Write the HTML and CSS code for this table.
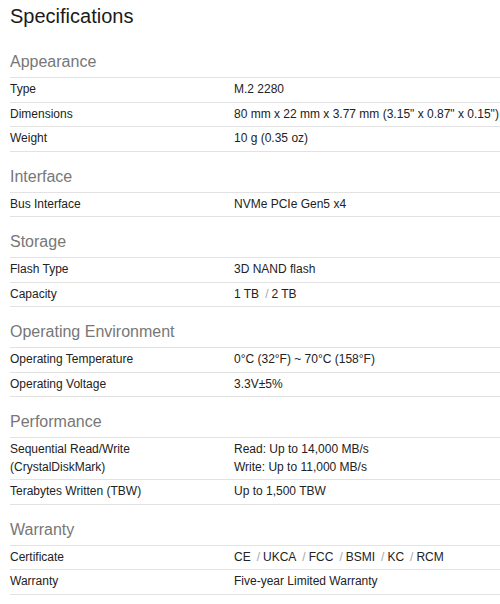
FILE: index.html
```html
<!DOCTYPE html>
<html>
<head>
<meta charset="utf-8">
<link rel="stylesheet" href="styles.css">
</head>
<body>
<div class="page">
  <h1 class="title">Specifications</h1>

  <section class="section">
    <h2 class="section-title">Appearance</h2>
    <div class="spec-table">
      <div class="row"><div class="label">Type</div><div class="value">M.2 2280</div></div>
      <div class="row"><div class="label">Dimensions</div><div class="value">80 mm x 22 mm x 3.77 mm (3.15" x 0.87" x 0.15")</div></div>
      <div class="row"><div class="label">Weight</div><div class="value">10 g (0.35 oz)</div></div>
    </div>
  </section>

  <section class="section">
    <h2 class="section-title">Interface</h2>
    <div class="spec-table">
      <div class="row"><div class="label">Bus Interface</div><div class="value">NVMe PCIe Gen5 x4</div></div>
    </div>
  </section>

  <section class="section">
    <h2 class="section-title">Storage</h2>
    <div class="spec-table">
      <div class="row"><div class="label">Flash Type</div><div class="value">3D NAND flash</div></div>
      <div class="row"><div class="label">Capacity</div><div class="value">1 TB<span class="sep">/</span>2 TB</div></div>
    </div>
  </section>

  <section class="section">
    <h2 class="section-title">Operating Environment</h2>
    <div class="spec-table">
      <div class="row"><div class="label">Operating Temperature</div><div class="value">0°C (32°F) ~ 70°C (158°F)</div></div>
      <div class="row"><div class="label">Operating Voltage</div><div class="value">3.3V±5%</div></div>
    </div>
  </section>

  <section class="section">
    <h2 class="section-title">Performance</h2>
    <div class="spec-table">
      <div class="row"><div class="label">Sequential Read/Write<br>(CrystalDiskMark)</div><div class="value">Read: Up to 14,000 MB/s<br>Write: Up to 11,000 MB/s</div></div>
      <div class="row"><div class="label">Terabytes Written (TBW)</div><div class="value">Up to 1,500 TBW</div></div>
    </div>
  </section>

  <section class="section">
    <h2 class="section-title">Warranty</h2>
    <div class="spec-table">
      <div class="row"><div class="label">Certificate</div><div class="value">CE<span class="sep">/</span>UKCA<span class="sep">/</span>FCC<span class="sep">/</span>BSMI<span class="sep">/</span>KC<span class="sep">/</span>RCM</div></div>
      <div class="row"><div class="label">Warranty</div><div class="value">Five-year Limited Warranty</div></div>
    </div>
  </section>
</div>
</body>
</html>
```

FILE: styles.css
```css
html, body {
  margin: 0;
  padding: 0;
  background: #ffffff;
}

body {
  font-family: "Liberation Sans", Arial, Helvetica, sans-serif;
  color: #222222;
}

.page {
  padding: 4px 0 0 10px;
}

.title {
  margin: 0;
  font-size: 20px;
  line-height: 24px;
  font-weight: normal;
  color: #1a1a1a;
}

.section {
  margin-top: 15px;
}

.section:first-of-type {
  margin-top: 24px;
}

.section-title {
  margin: 0 0 5px 0;
  font-size: 16px;
  line-height: 20px;
  font-weight: normal;
  color: #777777;
}

.spec-table {
  border-top: 1px solid #e2e2e2;
}

.row {
  display: flex;
  padding: 3px 0;
  border-bottom: 1px solid #e2e2e2;
  font-size: 12px;
  line-height: 17.5px;
}

.label {
  width: 224px;
  flex: none;
}

.value {
  flex: 1;
}

.sep {
  color: #a8a8a8;
  margin: 0 3px 0 6px;
}
```
